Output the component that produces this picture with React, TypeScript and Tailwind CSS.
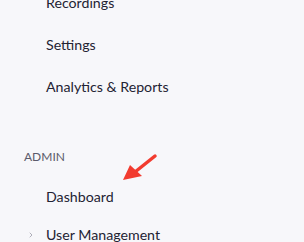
import { ChevronRight } from "lucide-react";

const TOP_ITEMS = ["Recordings", "Settings", "Analytics & Reports"];

function NavLink({ label, className = "" }: { label: string; className?: string }) {
  return (
    <a href="#" className={`block pl-[46px] text-[14.2px] text-[#232333] ${className}`}>
      {label}
    </a>
  );
}

export default function App() {
  return (
    <div
      className="relative w-[304px] h-[242px] overflow-hidden bg-[#f7f7fa]"
      style={{ fontFamily: "Lato, 'Open Sans', sans-serif" }}
    >
      <nav className="-mt-[18px]">
        {TOP_ITEMS.map((item) => (
          <NavLink key={item} label={item} className="leading-[42px]" />
        ))}

        {/* Admin section */}
        <div className="mt-[39px] pl-[24px] text-[12px] leading-[20px] text-[#5b5b6b]">ADMIN</div>
        <NavLink label="Dashboard" className="mt-[10px] leading-[39px]" />
        <div className="flex items-center leading-[38px]">
          <ChevronRight className="ml-[27px] w-[8px] h-[8px] text-[#8a8a99]" strokeWidth={2} />
          <a href="#" className="ml-[11px] text-[14.2px] text-[#232333]">
            User Management
          </a>
        </div>
      </nav>

      {/* annotation arrow */}
      <svg className="absolute left-[118px] top-[150px]" width="44" height="36" viewBox="0 0 44 36">
        <path d="M37 6 L17 22" stroke="#f23b2f" strokeWidth="3.5" strokeLinecap="round" />
        <path d="M5 30 L12 15 L24 26 Z" fill="#f23b2f" />
      </svg>
    </div>
  );
}
